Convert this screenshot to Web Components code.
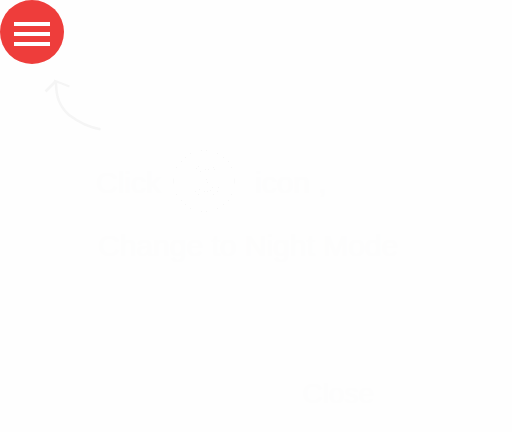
<!DOCTYPE html>
<html lang="en"><head><meta charset="utf-8"><title>Night mode</title>
<style>body{margin:0;background:#fefefe;font-family:"Liberation Sans",Arial,sans-serif}</style></head>
<body>
<night-tour><span slot="message">Change to Night Mode</span></night-tour>
<script>
class MenuButton extends HTMLElement{
 constructor(){super();this.attachShadow({mode:"open"}).innerHTML=`<style>
 :host{display:block}
 button{display:grid;place-content:center;gap:6px;width:64px;height:64px;padding:4px 0 0;border:0;border-radius:50%;background:#ee3d3b;cursor:pointer}
 i{display:block;width:36px;height:4px;background:#fff}
 </style><button aria-label="Menu"><i></i><i></i><i></i></button>`}
}
customElements.define("menu-button",MenuButton);
class ModeBadge extends HTMLElement{
 constructor(){super();this.attachShadow({mode:"open"}).innerHTML=`<style>
 :host{display:block}svg{display:block;width:62px;height:62px}
 </style><svg viewBox="0 0 62 62" aria-hidden="true">
 <g fill="none" stroke="#f7f7f7" transform="translate(0 .5)">
 <path d="M28 0h1M33 0h1M17 3h1M44 3h1M12 7h1M50 7h1M8 11h1M55 11h1M3 17h1M58 17h1M3 44h1M58 44h1M8 50h1M55 50h1M12 54h1M50 54h1M17 58h1M44 58h1M28 61h1M33 61h1"/>
 <path stroke="#fafafa" d="M.5 28v5M61.500 28v5"/>
 <path d="M25 16h1M23 18h1M27 21h1M32 19h1M35 19h1M40 17h1M41 19h1M33 29h1M34 32h1M39 37h1M45 37h1M44 41h1M40 44h1M37 40h1M34 41h1M31 41h1M26 39h1M22 41h1M25 44h1"/></g></svg>`}
}
customElements.define("mode-badge",ModeBadge);
class NightTour extends HTMLElement{
 constructor(){super();this.attachShadow({mode:"open"}).innerHTML=`<style>
 :host{display:block;color:#fdfdfd;font-size:30px;line-height:32px}
 .arrow{display:block;width:60px;height:54px;margin:14px 0 0 44px}
 .line{display:flex;align-items:center;margin:18px 0 0 96px}
 .line span{padding-top:4px}
 mode-badge{margin:0 20px 0 12px}
 .message{margin:18px 0 0 98px}
 footer{display:flex;justify-content:flex-end;padding:116px 138px 0 0}
 button{border:0;padding:0;background:none;color:inherit;font:inherit;font-size:28px;cursor:pointer}
 </style><menu-button></menu-button>
 <svg class="arrow" viewBox="0 0 60 54" fill="none" stroke="#f5f5f5" aria-hidden="true"><path stroke-width="2.500" d="M56.500 51.300C43 49 33 43 25 37C15 28 12 18 12 4M1.500 13.500L11.500 3.500"/><path stroke-width="2" d="M10 2.500L25.500 8.500"/></svg>
 <div class="line"><span>Click</span><mode-badge></mode-badge><span>icon ,</span></div>
 <div class="message"><slot name="message"></slot></div>
 <footer><button>Close</button></footer>`}
}
customElements.define("night-tour",NightTour);
</script></body></html>
